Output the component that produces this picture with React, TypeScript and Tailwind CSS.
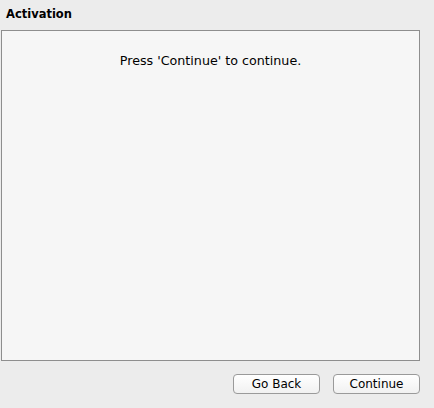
const App = () => {
  return (
    <div className="w-[434px] h-[408px] bg-[#ececec] font-['DejaVu_Sans',sans-serif] text-black">
      <div className="pt-[6px] pl-[6px] h-[30px] text-[11.5px] font-bold leading-[16px]">Activation</div>
      <div className="ml-[1px] w-[419px] h-[331px] border border-[#8e8e8e] bg-[#f6f6f6]">
        <p className="mt-[22px] text-center text-[12.7px] leading-[16px]">Press 'Continue' to continue.</p>
      </div>
      <div className="flex justify-end gap-[13px] pr-[14px] mt-[13px]">
        <button className="w-[87px] h-[20px] rounded-[4px] border border-[#9a9a9a] bg-gradient-to-b from-white to-[#f1f1f1] text-[12px] leading-[18px]">
          Go Back
        </button>
        <button className="w-[87px] h-[20px] rounded-[4px] border border-[#9a9a9a] bg-gradient-to-b from-white to-[#f1f1f1] text-[12px] leading-[18px]">
          Continue
        </button>
      </div>
    </div>
  );
};

export default App;
